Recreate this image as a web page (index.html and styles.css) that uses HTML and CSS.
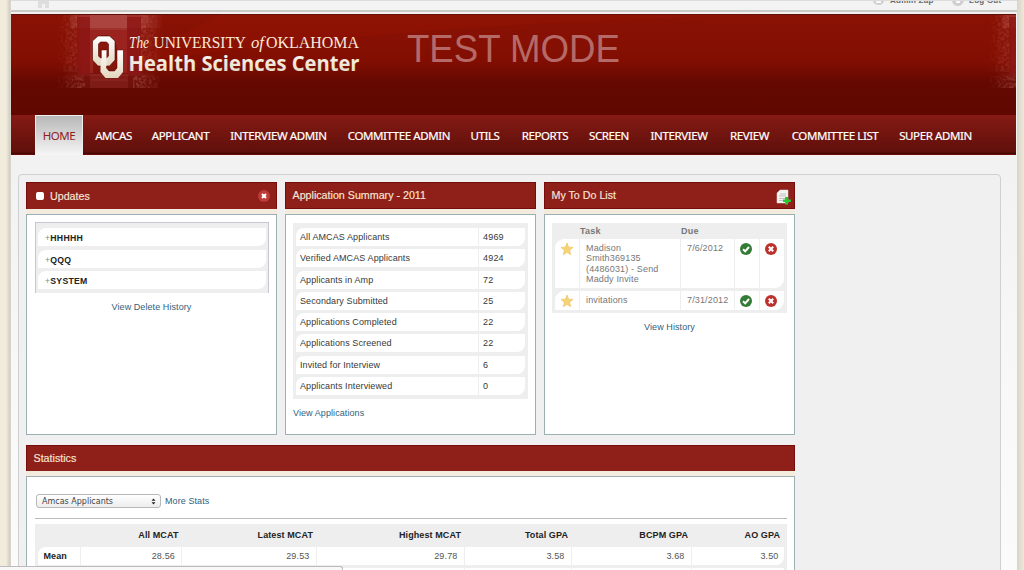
FILE: index.html
```html
<!DOCTYPE html>
<html lang="en">
<head>
<meta charset="utf-8">
<title>Health Sciences Center Admissions</title>
<link rel="stylesheet" href="styles.css">
</head>
<body>
<svg class="defs" width="0" height="0">
  <defs>
    <symbol id="ok" viewBox="0 0 14 14"><circle cx="7" cy="7" r="6" fill="#347b35"/><path d="M4 7.2 6.2 9.3 10 5" fill="none" stroke="#fff" stroke-width="2"/></symbol>
    <symbol id="no" viewBox="0 0 14 14"><circle cx="7" cy="7" r="6" fill="#bd312d"/><path d="M4.8 4.8 9.2 9.2M9.2 4.8 4.8 9.2" fill="none" stroke="#fff" stroke-width="2"/></symbol>
    <symbol id="star" viewBox="0 0 14 14"><path d="M7 .9 8.6 5.2 13 5.4 9.6 8.3 10.7 12.8 7 10.3 3.3 12.8 4.4 8.3 1 5.4 5.4 5.2Z" fill="#f7d377" stroke="#ecc052" stroke-width=".6"/></symbol>
    <g id="photo">
      <rect x="10" y="0" width="94" height="73" fill="#b44442" opacity=".15"/>
      <rect x="15" y="0" width="92" height="13" fill="#b85552" opacity=".4"/>
      <rect x="35" y="0" width="37" height="15" fill="#c87572" opacity=".3"/>
      <rect x="22" y="2" width="13" height="57" fill="#8d1816" opacity=".8"/>
      <rect x="72" y="2" width="14" height="57" fill="#8d1816" opacity=".8"/>
      <path d="M35 15H72V58H63V37Q61 21 50 20Q39 21 38 37V58H35Z" fill="#9e2724" opacity=".8"/>
      <path d="M35 59H73V73H35Z" fill="#98302d" opacity=".35"/>
      <path d="M36 65H72M14 60H100" stroke="#b0504c" opacity=".3"/>
      <rect x="0" y="0" width="22" height="57" filter="url(#grain)" opacity=".22"/>
      <rect x="86" y="0" width="25" height="50" filter="url(#grain)" opacity=".2"/>
      <rect x="0" y="61" width="30" height="12" filter="url(#grain)" opacity=".24"/>
      <rect x="78" y="61" width="27" height="12" filter="url(#grain)" opacity=".24"/>
    </g>
    <filter id="grain" x="0" y="0" width="100%" height="100%"><feTurbulence type="fractalNoise" baseFrequency=".35" numOctaves="3" seed="4"/><feColorMatrix values="0 0 0 0 .82  0 0 0 0 .38  0 0 0 0 .36  3 0 0 0 -1.1"/></filter>
    <linearGradient id="edge"><stop offset="0" stop-color="#000"/><stop offset=".24" stop-color="#fff"/><stop offset=".76" stop-color="#fff"/><stop offset=".95" stop-color="#000"/></linearGradient>
    <mask id="fade"><rect x="0" y="0" width="115" height="75" fill="url(#edge)"/></mask>
    <linearGradient id="metal" x1="0" y1="0" x2="0" y2="1"><stop offset="0" stop-color="#fff"/><stop offset="1" stop-color="#e3d6bf"/></linearGradient>
  </defs>
</svg>
<div class="page">
  <div class="topbar">
    <svg class="homeicon" width="14" height="8"><path d="M2 0V7H6V3H9V7H13V0" fill="#dedede"/></svg>
    <div class="account">
      <svg width="12" height="5"><path d="M0 0H11Q10 4 6 4Q1 4 0 0Z" fill="#d0d0d0"/><path d="M3 0H8V2H3Z" fill="#f8f8f8"/></svg>
      <a class="zap"><span>Admin Zap</span></a>
      <svg width="12" height="5"><path d="M0 0H12Q10 5 6 5Q1 5 0 0Z" fill="#d0d0d0"/><path d="M4 0H8V2H4Z" fill="#f8f8f8"/></svg>
      <a class="logout"><span>Log Out</span></a>
    </div>
  </div>
  <header class="banner">
    <svg class="brand" width="1005" height="101" viewBox="11 14 1005 101">
      <path d="M130 63Q330 36 500 26T800 14H220Q180 35 130 63Z" fill="#b51a06" opacity=".14"/>
      <g transform="translate(55 15)"><use href="#photo" mask="url(#fade)"/></g>
      <g transform="translate(987 15)"><use href="#photo" mask="url(#fade)"/></g>
      <g stroke="#500500" stroke-width=".6" fill="url(#metal)" fill-rule="evenodd">
        <path d="M98 36H109.500L115 41V60L109.500 66H98L92.500 60V41ZM100.500 42 98.500 44V56L100.500 58H106.500L108.500 56V44L106.500 42Z"/>
        <path d="M101.500 50H106.500V68L109 71H114.500L117 68V50H123V72L118 78H105.500L100.500 72V66L101.500 58Z" stroke="none"/>
      </g>
      <path d="M101 58V50H106M117 68V50H123M106.500 66V68L109 71H114.500L117 68" fill="none" stroke="#500500" stroke-width=".5"/>
      <g class="wordmark">
        <text class="italic" x="129" y="48" font-size="16" textLength="20" lengthAdjust="spacingAndGlyphs">The</text>
        <text x="153.500" y="48" font-size="16" textLength="92.500" lengthAdjust="spacingAndGlyphs">UNIVERSITY</text>
        <text class="italic" x="251" y="48" font-size="16" textLength="13" lengthAdjust="spacingAndGlyphs">of</text>
        <text x="266" y="48" font-size="16" textLength="93" lengthAdjust="spacingAndGlyphs">OKLAHOMA</text>
      </g>
      <text class="center" x="128.500" y="70.500" textLength="231" lengthAdjust="spacingAndGlyphs">Health Sciences Center</text>
      <text class="mode" x="407" y="61.500" textLength="213" lengthAdjust="spacingAndGlyphs">TEST MODE</text>
    </svg>
  </header>
  <nav class="nav">
    <a class="active">HOME</a><a>AMCAS</a><a>APPLICANT</a><a>INTERVIEW ADMIN</a><a>COMMITTEE ADMIN</a><a>UTILS</a><a>REPORTS</a><a>SCREEN</a><a>INTERVIEW</a><a>REVIEW</a><a>COMMITTEE LIST</a><a>SUPER ADMIN</a>
  </nav>
  <main class="content">
    <div class="panels">
      <section class="panel">
        <h2 class="title updates"><i class="box"></i><span>Updates</span><svg class="close" width="14" height="14" viewBox="0 0 14 14"><circle cx="7" cy="7" r="6" fill="#bd3b38"/><path d="M5 5 9 9M9 5 5 9" stroke="#fff" stroke-width="2"/></svg></h2>
        <div class="body">
          <ul class="notes"><li><i>+</i>HHHHH</li><li><i>+</i>QQQ</li><li><i>+</i>SYSTEM</li></ul>
          <a class="link history">View Delete History</a>
        </div>
      </section>
      <section class="panel">
        <h2 class="title"><span>Application Summary - 2011</span></h2>
        <div class="body">
          <div class="summary">
            <div><span>All AMCAS Applicants</span><b>4969</b></div>
            <div><span>Verified AMCAS Applicants</span><b>4924</b></div>
            <div><span>Applicants in Amp</span><b>72</b></div>
            <div><span>Secondary Submitted</span><b>25</b></div>
            <div><span>Applications Completed</span><b>22</b></div>
            <div><span>Applications Screened</span><b>22</b></div>
            <div><span>Invited for Interview</span><b>6</b></div>
            <div><span>Applicants Interviewed</span><b>0</b></div>
          </div>
          <a class="link">View Applications</a>
        </div>
      </section>
      <section class="panel">
        <h2 class="title"><span>My To Do List</span><svg class="add" width="16" height="16" viewBox="0 0 16 16"><path d="M4 1H12V14H1V4Z" fill="#f4f4f4" stroke="#ddd" stroke-width=".5"/><path d="M4 5H10M3 7H10M3 9.500H9M3 11.500H8" stroke="#aaa" stroke-width=".7"/><path d="M9 8H12V10.500H15V13H12V15.500H9V13H7V10.500H9Z" fill="#2bc72f"/></svg></h2>
        <div class="body">
          <div class="todo">
            <div class="head"><span></span><b>Task</b><b>Due</b></div>
            <div class="task first"><span><svg width="14" height="14"><use href="#star"/></svg></span><p>Madison<br>Smith369135<br>(4486031) - Send<br>Maddy Invite</p><p>7/6/2012</p><span><svg width="14" height="14"><use href="#ok"/></svg></span><span><svg width="14" height="14"><use href="#no"/></svg></span></div>
            <div class="task"><span><svg width="14" height="14"><use href="#star"/></svg></span><p>invitations</p><p>7/31/2012</p><span><svg width="14" height="14"><use href="#ok"/></svg></span><span><svg width="14" height="14"><use href="#no"/></svg></span></div>
          </div>
          <a class="link history">View History</a>
        </div>
      </section>
    </div>
    <section class="statistics">
      <h2 class="title"><span>Statistics</span></h2>
      <div class="statbody">
        <div class="filter"><div class="select"><span>Amcas Applicants</span><svg width="5" height="7"><path d="M.5 2.800 2.500 .5 4.500 2.800ZM.5 4.200H4.500L2.500 6.500Z" fill="#222"/></svg></div><a class="link">More Stats</a></div>
        <div class="stats">
          <div class="row names"><b></b><b>All MCAT</b><b>Latest MCAT</b><b>Highest MCAT</b><b>Total GPA</b><b>BCPM GPA</b><b>AO GPA</b></div>
          <div class="row values"><b>Mean</b><span>28.56</span><span>29.53</span><span>29.78</span><span>3.58</span><span>3.68</span><span>3.50</span></div>
          <div class="row values"><b></b><span></span><span></span><span></span><span></span><span></span><span></span></div>
        </div>
      </div>
    </section>
  </main>
</div>
<div class="status"></div>
</body>
</html>
```
FILE: styles.css
```css
* { box-sizing: border-box; }
body { margin: 0; height: 570px; overflow: hidden; background: linear-gradient(90deg, #f1ecdc 0 6px, #d0ccc1 10px, #e0ddd2 11px, #d3d0c7 1016px, #dedace 1019px, #eee8d7 1024px); font-family: "Liberation Sans", Arial, sans-serif; }
.defs { position: absolute; }
.page { width: 1006px; height: 570px; margin-left: 11px; overflow: hidden; background: linear-gradient(#f2f2f2 0 170px, #f8f8f8 380px, #fbfbfb); }
.topbar { height: 14px; display: flex; justify-content: space-between; overflow: hidden; border-top: 1px solid #dcdcdc; background: linear-gradient(#f3f3f3 0 9px, #c8cbc8 9px 11px, #f4eeec 11px); }
.homeicon { margin-left: 25px; }
.account { display: flex; align-items: flex-start; padding-right: 14px; }
.account a { height: 7px; font: bold 8px/8px "Liberation Sans", Arial, sans-serif; letter-spacing: .25px; color: #666; white-space: nowrap; }
.account span { display: block; margin-top: -4px; }
.zap { width: 67px; padding-left: 5px; }
.account .logout { width: 39px; padding-left: 5px; }
.banner { height: 101px; width: 1005px; border-top: 1px solid #5b100b; background: linear-gradient(#891204, #820e02 46px, #640901 67px, #600800); }
.brand { display: block; margin-top: -1px; }
.wordmark { font-family: "Liberation Serif", serif; fill: #f8e9dc; }
.wordmark .italic { font-style: italic; }
.center { font: bold 21.5px "Open Sans", "Noto Sans", sans-serif; fill: url(#metal); }
.mode { font: 39px "Liberation Sans", Arial, sans-serif; fill: #b56a67; }
.nav { height: 40px; width: 1005px; padding-left: 24px; display: grid; grid-template-columns: 48px 61px 73px 123px 118px 54px 66px 62px 78px 63px 108px 93px; background: linear-gradient(#851a14, #60100b 37px, #480a07 38px); border-bottom: 1px solid #700c08; }
.nav a { height: 40px; text-align: center; font: 11.5px/41px "Noto Sans", sans-serif; letter-spacing: -.4px; color: #fff; white-space: nowrap; -webkit-text-stroke: .2px; }
.nav .active { color: #8d211b; background: linear-gradient(#b7b7b7, #f6f6f6); border: solid #eee; border-width: 1px 1px 0; line-height: 39px; -webkit-text-stroke: 0; }
.content { width: 983px; height: 420px; margin: 19px 0 0 7px; padding: 7px; border: 1px solid #d0d0d0; border-radius: 4px 4px 0 0; background: #f0f0f0; }
.panels { display: grid; grid-template-columns: repeat(3, 251px); gap: 8px; }
.panel { height: 253px; background: #f0f0f0; }
.title { display: flex; align-items: center; width: 100%; height: 27px; margin: 0; padding: 0 6.5px; border: 1px solid #760c0c; background: #8f2019; color: #f8e6d8; font-size: 10.7px; line-height: 13px; font-weight: normal; -webkit-text-stroke: .15px; }
.updates { height: 28px; }
.box { width: 8px; height: 8px; margin: 0 6px 0 2.5px; border-radius: 2px; background: #fff; }
.close { margin-left: auto; margin-right: -1.5px; }
.add { margin: 3px -4px 0 auto; }
.title + div { border: 1px solid #9bafb4; background: #fff; box-shadow: 0 -5px #f3ebdd; }
.body { height: 221px; margin-top: 5px; padding: 8px 7px; }
.updates + .body { margin-top: 4px; }
.notes { list-style: none; margin: -1px 0 0 1px; padding: 5px 3px 3px 2px; height: 71px; border: 1px solid #c7c7d4; border-width: 1px 1px 0; background: #eee; display: grid; grid-template-rows: repeat(3, 18px); row-gap: 3.500px; }
.notes li { width: 228px; padding-left: 7px; border-radius: 8px 0 8px 0; background: #fff; font: bold 8.7px/20px "Liberation Sans", Arial, sans-serif; letter-spacing: .25px; color: #222; }
.notes i { font-style: normal; font-weight: normal; color: #888; }
.link { display: block; font-size: 9px; line-height: 11px; color: #31617d; letter-spacing: .08px; white-space: nowrap; }
.history { text-align: center; margin-top: 9px; }
.summary { width: 235px; height: 176px; padding: 5px 3px 4px; background: #eee; display: grid; grid-template-rows: repeat(8, 18px); row-gap: 3.300px; font-size: 9px; line-height: 19px; color: #383838; margin-bottom: 9px; }
.summary div { display: grid; grid-template-columns: 182px 47px; width: 229px; border-radius: 8px 0 8px 0; background: #fff; letter-spacing: .1px; }
.summary span { padding-left: 4px; }
.summary b { font-weight: normal; border-left: 1px solid #eee; padding-left: 4px; letter-spacing: .2px; }
.todo { width: 235px; height: 90px; background: #eee; padding: 0 3px 3px; color: #777; font-size: 9px; }
.head { height: 16px; display: grid; grid-template-columns: 25px 101px 60px; line-height: 16px; letter-spacing: .2px; }
.task { height: 19px; display: grid; grid-template-columns: 25px 101px 54px 25px 24px; border-radius: 9px 0 9px 0; background: #fff; overflow: hidden; }
.first { height: 49px; margin-bottom: 3px; }
.task > * { margin: 0; padding: 2.500px 5px; border-right: 1px solid #eee; }
.task > :nth-child(n+4) { padding-left: 4px; }
.task > :last-child { border: 0; }
.task p { padding-left: 6px; padding-right: 0; line-height: 10.300px; padding-top: 4px; letter-spacing: .15px; white-space: nowrap; }
.task svg { display: block; }
.statistics { width: 769px; margin-top: 10px; }
.statbody { margin-top: 4px; height: 110px; padding: 17px 7px 0 8px; }
.filter { height: 25px; padding-left: 1px; display: flex; gap: 4px; border-bottom: 1px solid #bbb; }
.select { width: 125px; height: 14px; padding: 1px 4px 0 5px; display: flex; align-items: center; justify-content: space-between; border: 1px solid #b8b8b8; border-radius: 3px; background: linear-gradient(#fff, #ededed); font: 8px/12px "DejaVu Sans", sans-serif; color: #444; }
.filter .link { margin-top: 2px; }
.stats { width: 752px; margin-top: 5px; padding: 0 3px; height: 60px; background: #eee; font-size: 9px; }
.row { display: grid; grid-template-columns: 43px 101px 134.500px 148px 107px 120px 92px; text-align: right; }
.names { height: 23px; line-height: 23px; color: #222; letter-spacing: .1px; }
.names b { padding-right: 3.500px; }
.values { height: 18px; line-height: 18px; margin-bottom: 3px; background: #fff; border-radius: 8px 0 8px 0; }
.values > * { padding-right: 6px; border-right: 1px solid #eee; color: #555; letter-spacing: .15px; }
.values b { color: #222; padding-right: 13px; }
.values > :last-child { border: 0; padding-right: 5px; }
.status { position: absolute; left: -2px; bottom: 0; width: 345px; height: 4px; border: 1px solid #bbb; border-bottom: 0; border-radius: 0 3px 0 0; background: #f8f8f8; }
```
